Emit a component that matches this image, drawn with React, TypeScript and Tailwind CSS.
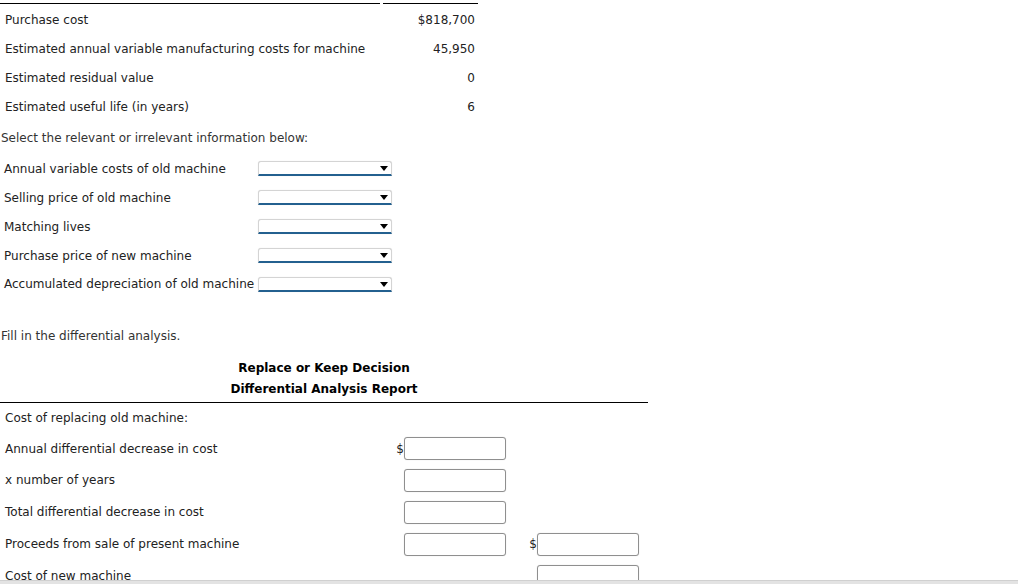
import React from "react";

const font = { fontFamily: '"DejaVu Sans", Verdana, sans-serif' };

function Select() {
  return (
    <div className="relative w-[134px] h-[15px] bg-white border border-[#d4d4d4] border-b-[2px] border-b-[#23608f] rounded-t-[3px] shadow-[0_0_1px_rgba(0,0,0,0.15)]">
      <svg className="absolute right-[3px] top-[4px]" width="8" height="5" viewBox="0 0 8 5">
        <path d="M0 0 H8 L4 5 Z" fill="#000" />
      </svg>
    </div>
  );
}

function Input() {
  return <div className="w-[102px] h-[23px] bg-white border border-[#8f8f8f] rounded-[3px] shadow-[0_0_1px_rgba(0,0,0,0.2)]" />;
}

export default function App() {
  const top = [
    ["Purchase cost", "$818,700"],
    ["Estimated annual variable manufacturing costs for machine", "45,950"],
    ["Estimated residual value", "0"],
    ["Estimated useful life (in years)", "6"],
  ];
  const sel = [
    "Annual variable costs of old machine",
    "Selling price of old machine",
    "Matching lives",
    "Purchase price of new machine",
    "Accumulated depreciation of old machine",
  ];
  return (
    <div className="relative w-[1018px] h-[584px] overflow-hidden bg-white text-[12px] text-[#222]" style={font}>
      <div className="w-[478px] pt-[3px]">
        <div className="flex mb-[1px]">
          <div className="w-[380px] border-t border-black" />
          <div className="w-[3px]" />
          <div className="w-[95px] border-t border-black" />
        </div>
        {top.map(([l, v]) => (
          <div key={l} className="flex h-[29px] items-center">
            <div className="w-[383px] pl-[5px]">{l}</div>
            <div className="w-[95px] text-right pr-[3px]">{v}</div>
          </div>
        ))}
      </div>
      <div className="mt-[9px] pl-[1px] leading-[16px] text-[#333]">Select the relevant or irrelevant information below:</div>
      <div className="mt-[8px]">
        {sel.map((l, i) => (
          <div key={l} className={`flex items-center ${i === 4 ? "h-[28px]" : "h-[29px]"}`}>
            <div className="w-[258px] pl-[4px] whitespace-nowrap">{l}</div>
            <Select />
          </div>
        ))}
      </div>
      <div className="mt-[30px] pl-[1px] leading-[16px] text-[#333]">Fill in the differential analysis.</div>
      <div className="w-[648px] mt-[14px] text-center font-bold leading-[21px] text-black">
        <div>Replace or Keep Decision</div>
        <div>Differential Analysis Report</div>
      </div>
      <div className="w-[648px] mt-[2px] border-t border-black" />
      <div>
        <div className="flex h-[30px] items-center pl-[5px]">Cost of replacing old machine:</div>
        <div className="flex h-[31px] items-center">
          <div className="w-[392px] pl-[5px]">Annual differential decrease in cost</div>
          <div className="w-[12px] text-right">$</div>
          <Input />
        </div>
        <div className="flex h-[32px] items-center">
          <div className="w-[404px] pl-[5px]">x number of years</div>
          <Input />
        </div>
        <div className="flex h-[32px] items-center">
          <div className="w-[404px] pl-[5px]">Total differential decrease in cost</div>
          <Input />
        </div>
        <div className="flex h-[32px] items-center">
          <div className="w-[404px] pl-[5px]">Proceeds from sale of present machine</div>
          <Input />
          <div className="w-[31px] text-right">$</div>
          <Input />
        </div>
        <div className="flex h-[32px] items-center">
          <div className="w-[404px] pl-[5px]">Cost of new machine</div>
          <div className="w-[102px]" />
          <div className="w-[31px]" />
          <Input />
        </div>
      </div>
      <div className="absolute left-0 right-0 bottom-0 h-[4px] bg-[#e3e3e3] border-t border-[#d0d0d0]" />
    </div>
  );
}
